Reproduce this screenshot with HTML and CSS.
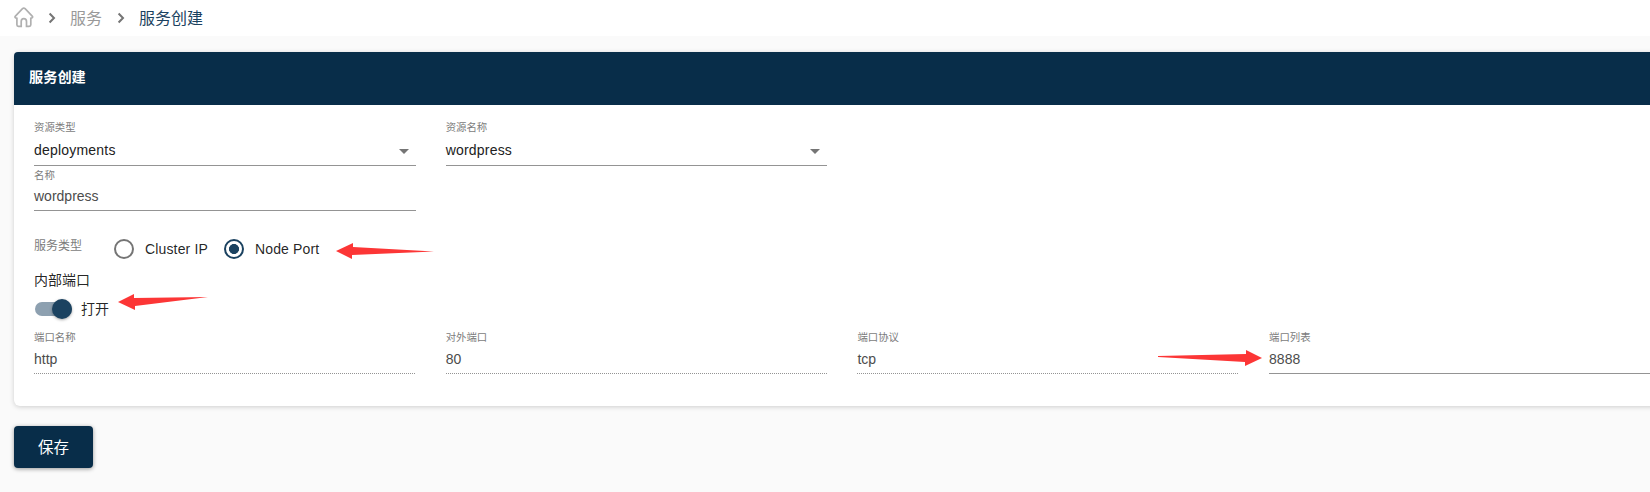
FILE: index.html
```html
<!DOCTYPE html>
<html lang="zh-CN">
<head>
<meta charset="utf-8">
<title>服务创建</title>
<link rel="stylesheet" href="styles.css">
</head>
<body>
<nav class="breadcrumb">
  <svg class="home" width="20" height="21" viewBox="0 0 20 21"><path d="M2.9 10.6V17.8Q2.9 19.4 4.4 19.4H7.2V14.4Q7.2 11.6 9.8 11.6Q12.5 11.6 12.5 14.4V19.4H15.2Q16.8 19.4 16.8 17.8V10.6M2.9 11H1.7Q.4 10.2 1.4 9.1L8.5 1.7Q9.8.5 11.1 1.7L18.2 9.1Q19.3 10.3 17.8 11H16.8"/></svg>
  <svg class="chevron" width="8" height="12" viewBox="0 0 8 12"><path d="M1.6 1.5L6 6L1.6 10.5"/></svg>
  <span class="crumb">服务</span>
  <svg class="chevron second" width="8" height="12" viewBox="0 0 8 12"><path d="M1.6 1.5L6 6L1.6 10.5"/></svg>
  <span class="crumb current">服务创建</span>
</nav>
<main class="content">
  <section class="card">
    <h1 class="card-title">服务创建</h1>
    <div class="card-body">
      <div class="grid selects">
        <div class="field select"><label class="label">资源类型</label><div class="value spaced">deployments</div><i class="caret"></i></div>
        <div class="field select"><label class="label">资源名称</label><div class="value spaced">wordpress</div><i class="caret"></i></div>
      </div>
      <div class="grid name-row">
        <div class="field"><label class="label">名称</label><div class="value">wordpress</div></div>
      </div>
      <div class="service-type">
        <span class="type-label">服务类型</span>
        <span class="radio"></span><span class="option">Cluster IP</span>
        <span class="radio checked"></span><span class="option">Node Port</span>
        <svg class="arrow radio-arrow" width="98" height="18" viewBox="0 0 98 18"><path d="M0 9L17 1V5L98 9.5L16 13V17Z"/></svg>
      </div>
      <div class="port-title">内部端口</div>
      <div class="switch-row">
        <span class="switch"><span class="thumb"></span></span>
        <span class="switch-text">打开</span>
        <svg class="arrow switch-arrow" width="91" height="18" viewBox="0 0 91 18"><path d="M0 9L16 1V5L90 4L17 13V17Z"/></svg>
      </div>
      <div class="grid ports">
        <div class="field disabled"><label class="label">端口名称</label><div class="value">http</div></div>
        <div class="field disabled"><label class="label">对外端口</label><div class="value">80</div></div>
        <div class="field disabled"><label class="label">端口协议</label><div class="value">tcp</div></div>
        <div class="field"><label class="label">端口列表</label><div class="value">8888</div>
          <svg class="arrow list-arrow" width="104" height="18" viewBox="0 0 104 18"><path d="M104 9L88 1V5L0 7V8L87 13V17Z"/></svg>
        </div>
      </div>
    </div>
  </section>
  <button class="save">保存</button>
</main>
</body>
</html>
```
FILE: styles.css
```css
* { box-sizing: border-box; }
body {
  margin: 0;
  height: 492px;
  overflow: hidden;
  background: #fafafa;
  color: rgba(0, 0, 0, .87);
  font: 14px/20px "Liberation Sans", "Noto Sans CJK SC", sans-serif;
}
.breadcrumb {
  display: flex;
  align-items: center;
  height: 36px;
  padding-left: 14px;
  background: #fff;
  font-size: 16px;
}
.home { margin-bottom: 2px; }
.home path { fill: none; stroke: #b0b0b0; stroke-width: 1.7; }
.chevron { margin: 0 14px 0 14px; }
.chevron.second { margin: 0 14px 0 15px; }
.chevron path { fill: none; stroke: #757575; stroke-width: 2; }
.crumb { padding-top: 2px; color: #999; }
.crumb.current { color: #1b4260; }
.content { padding: 16px 0 0 14px; }
.card {
  width: 1662px;
  height: 354px;
  border-radius: 6px;
  background: #fff;
  box-shadow: 0 1px 5px rgba(0, 0, 0, .18);
}
.card-title {
  height: 53px;
  margin: 0;
  padding-left: 15px;
  border-radius: 4px 4px 0 0;
  background: #082d49;
  color: #fff;
  font-size: 14.2px;
  line-height: 50px;
}
.card-body { padding: 14px 0 0 20px; }
.grid {
  display: grid;
  grid-template-columns: repeat(4, 381.7px);
  column-gap: 30px;
}
.field {
  position: relative;
  height: 47px;
  border-bottom: 1px solid #949494;
}
.label {
  display: block;
  height: 16px;
  color: #7c7c7c;
  font-size: 10.4px;
  line-height: 17px;
}
.value { color: #4c4c4c; line-height: 20px; padding-top: 5px; }
.select .value { color: #212121; }
.value.spaced { letter-spacing: .2px; }
.name-row .value { padding-top: 4px; }
.name-row .field { height: 45px; }
.name-row .label { padding-top: 1px; }
.caret {
  position: absolute;
  right: 7px;
  top: 30px;
  border: 5px solid transparent;
  border-top-color: #757575;
  border-bottom: 0;
}
.service-type {
  display: flex;
  align-items: center;
  height: 20px;
  margin-top: 28px;
}
.type-label {
  width: 80px;
  padding-bottom: 7px;
  color: #7c7c7c;
  font-size: 12px;
}
.radio {
  width: 20px;
  height: 20px;
  margin-right: 11px;
  border: 2px solid #757575;
  border-radius: 50%;
}
.radio.checked {
  margin-left: 16px;
  border-color: #1b4260;
  background: radial-gradient(circle, #1b4260 4.7px, transparent 5.3px);
}
.option { white-space: nowrap; letter-spacing: .15px; }
.arrow path { fill: #fc3636; }
.radio-arrow { margin: 4px 0 0 17px; }
.port-title { height: 20px; margin-top: 11px; }
.switch-row {
  display: flex;
  align-items: center;
  height: 20px;
  margin-top: 9px;
}
.switch {
  display: flex;
  align-items: center;
  justify-content: flex-end;
  width: 37px;
  height: 14px;
  margin: 0 9px 0 1px;
  border-radius: 7px;
  background: #8da0b0;
}
.thumb {
  flex: none;
  width: 20px;
  height: 20px;
  border-radius: 50%;
  background: #1b4260;
  box-shadow: 0 1px 3px rgba(0, 0, 0, .35);
}
.switch-arrow { margin: -15px 0 0 9px; }
.ports { margin-top: 10px; }
.ports .field { height: 45px; }
.ports .value { padding-top: 4px; }
.ports .disabled { border-bottom: 0; }
.disabled::after {
  content: "";
  display: block;
  height: 1px;
  margin-top: 4px;
  background: repeating-linear-gradient(90deg, #949494 0 1px, transparent 1px 2px);
}
.list-arrow {
  position: absolute;
  right: 100%;
  top: 20px;
  margin-right: 7px;
}
.save {
  display: block;
  width: 79px;
  height: 42px;
  margin-top: 20px;
  padding: 1px 0 0;
  border: 0;
  border-radius: 4px;
  background: #082d49;
  box-shadow: 0 1px 4px rgba(0, 0, 0, .4);
  color: #fff;
  font: 15.5px/20px "Liberation Sans", "Noto Sans CJK SC", sans-serif;
}
```
